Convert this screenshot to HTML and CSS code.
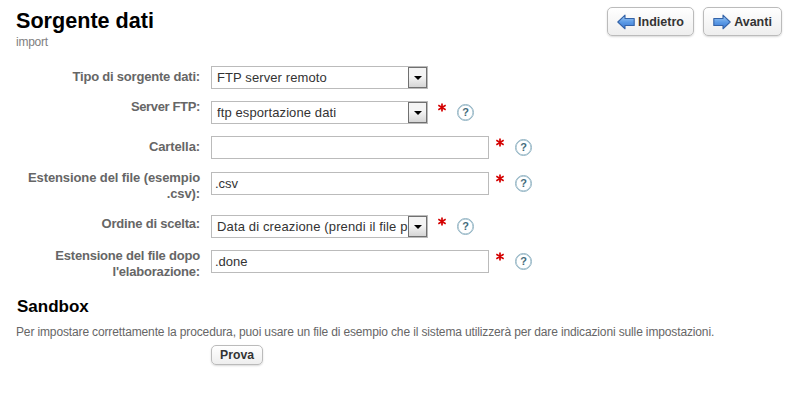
FILE: index.html
```html
<!DOCTYPE html>
<html lang="it">
<head>
<meta charset="utf-8">
<title>Sorgente dati</title>
<link rel="stylesheet" href="styles.css">
</head>
<body>
<svg class="defs" aria-hidden="true">
  <defs>
    <linearGradient id="blue" x1="0" y1="0" x2="0" y2="1">
      <stop offset="0" stop-color="#a9d0f5"/>
      <stop offset=".5" stop-color="#5c9be6"/>
      <stop offset="1" stop-color="#3a76d2"/>
    </linearGradient>
    <symbol id="arrow" viewBox="0 0 18 16">
      <path d="M.8 8 8 1.2V4.5H17.2V11.5H8V14.8Z" fill="url(#blue)" stroke="#3463a8" stroke-width="1.1" stroke-linejoin="round"/>
    </symbol>
    <symbol id="required" viewBox="0 0 8 8">
      <path d="M4 0V8M.3 1.8 7.7 6.2M7.7 1.8 .3 6.2" stroke="#d40000" stroke-width="1.7" fill="none"/>
    </symbol>
  </defs>
</svg>
<header class="header">
  <div>
    <h1 class="title">Sorgente dati</h1>
    <p class="subtitle">import</p>
  </div>
  <nav class="actions">
    <button class="nav-button back"><svg class="arrow"><use href="#arrow"/></svg><span>Indietro</span></button>
    <button class="nav-button next"><svg class="arrow flip"><use href="#arrow"/></svg><span>Avanti</span></button>
  </nav>
</header>
<main>
  <form class="form">
    <div class="row r1">
      <label class="label low">Tipo di sorgente dati:</label>
      <div class="select"><span class="value">FTP server remoto</span><i class="drop"></i></div>
    </div>
    <div class="row r2">
      <label class="label">Server FTP:</label>
      <div class="select"><span class="value">ftp esportazione dati</span><i class="drop"></i></div>
      <svg class="required"><use href="#required"/></svg><span class="help">?</span>
    </div>
    <div class="row r3">
      <label class="label low">Cartella:</label>
      <div class="input"></div>
      <svg class="required"><use href="#required"/></svg><span class="help">?</span>
    </div>
    <div class="row r4">
      <label class="label">Estensione del file (esempio<br>.csv):</label>
      <div class="input">.csv</div>
      <svg class="required"><use href="#required"/></svg><span class="help">?</span>
    </div>
    <div class="row r5">
      <label class="label mid">Ordine di scelta:</label>
      <div class="select"><span class="value">Data di creazione (prendi il file p</span><i class="drop"></i></div>
      <svg class="required"><use href="#required"/></svg><span class="help">?</span>
    </div>
    <div class="row r6">
      <label class="label">Estensione del file dopo<br>l'elaborazione:</label>
      <div class="input">.done</div>
      <svg class="required"><use href="#required"/></svg><span class="help">?</span>
    </div>
  </form>
  <section class="sandbox">
    <h2 class="heading">Sandbox</h2>
    <p class="note">Per impostare correttamente la procedura, puoi usare un file di esempio che il sistema utilizzerà per dare indicazioni sulle impostazioni.</p>
    <button class="try">Prova</button>
  </section>
</main>
</body>
</html>
```
FILE: styles.css
```css
* { box-sizing: border-box; }
body {
  margin: 0;
  padding: 7px 5px 0 16px;
  height: 402px;
  background: #fff;
  font-family: "Liberation Sans", Arial, sans-serif;
  color: #333;
}
.defs { position: absolute; width: 0; height: 0; }
h1, h2, p { margin: 0; }
.header { display: flex; justify-content: space-between; height: 59px; }
.title { font-size: 21.6px; line-height: 28px; color: #000; }
.subtitle { font-size: 12px; line-height: 14px; color: #808080; letter-spacing: -.25px; }
.actions { display: flex; gap: 9px; }
button {
  display: flex;
  align-items: center;
  justify-content: center;
  padding: 0;
  font: bold 12.2px "Liberation Sans", Arial, sans-serif;
  color: #333;
  background: linear-gradient(#fff, #eee);
  border: 1px solid #bbb;
  border-radius: 5px;
  box-shadow: 0 1px 2px rgba(0, 0, 0, .15);
}
.nav-button { height: 29px; gap: 3px; font-size: 12.5px; }
.back { width: 87px; }
.next { width: 79px; }
.arrow { width: 18px; height: 16px; }
.flip { transform: scaleX(-1); }
.row { display: flex; align-items: flex-start; }
.r1, .r2 { height: 35px; }
.r3 { height: 36px; }
.r4 { height: 43px; }
.r5 { height: 35px; }
.r6 { height: 47px; }
.label {
  width: 184px;
  margin: -2px 11px 0 0;
  text-align: right;
  font-weight: bold;
  font-size: 13px;
  line-height: 16px;
  letter-spacing: -.2px;
  color: #666;
  white-space: nowrap;
}
.r2 .label { letter-spacing: -.35px; }
.r3 .label { letter-spacing: -.1px; }
.r4 .label { letter-spacing: -.1px; }
.low { margin-top: 3px; }
.mid { margin-top: 1px; }
.select, .input {
  height: 23px;
  border: 1px solid #bbb;
  font-size: 13px;
  line-height: 21px;
  white-space: nowrap;
}
.select { display: flex; width: 217px; padding-left: 5px; }
.value { flex: 1; overflow: hidden; letter-spacing: .1px; }
.r5 .value { letter-spacing: .14px; }
.drop {
  display: flex;
  align-items: center;
  justify-content: center;
  width: 19px;
  height: 21px;
  border: 1px solid #707070;
  background: linear-gradient(#f4f4f4 45%, #d5d5d5);
}
.drop::after { content: ""; border: 4px solid transparent; border-top-color: #000; border-bottom: 0; }
.input { width: 278px; padding-left: 3px; }
.required { width: 8px; height: 9px; margin: 2px 0 0 10px; }
.input + .required { margin-left: 7px; }
.help {
  width: 17px;
  height: 17px;
  margin: 3px 0 0 11px;
  border: 1.5px solid #8fb2c2;
  border-radius: 50%;
  box-shadow: inset 0 0 0 .5px #8fb2c2;
  text-align: center;
  font-weight: bold;
  font-size: 11px;
  line-height: 15px;
  color: #456b7b;
}
.heading { padding-left: 1px; font-size: 17px; line-height: 20px; color: #000; }
.note { margin-top: 7px; font-size: 12px; line-height: 16px; color: #666; letter-spacing: -.137px; white-space: nowrap; }
.try { width: 52px; height: 20px; margin: 5px 0 0 195px; }
```
